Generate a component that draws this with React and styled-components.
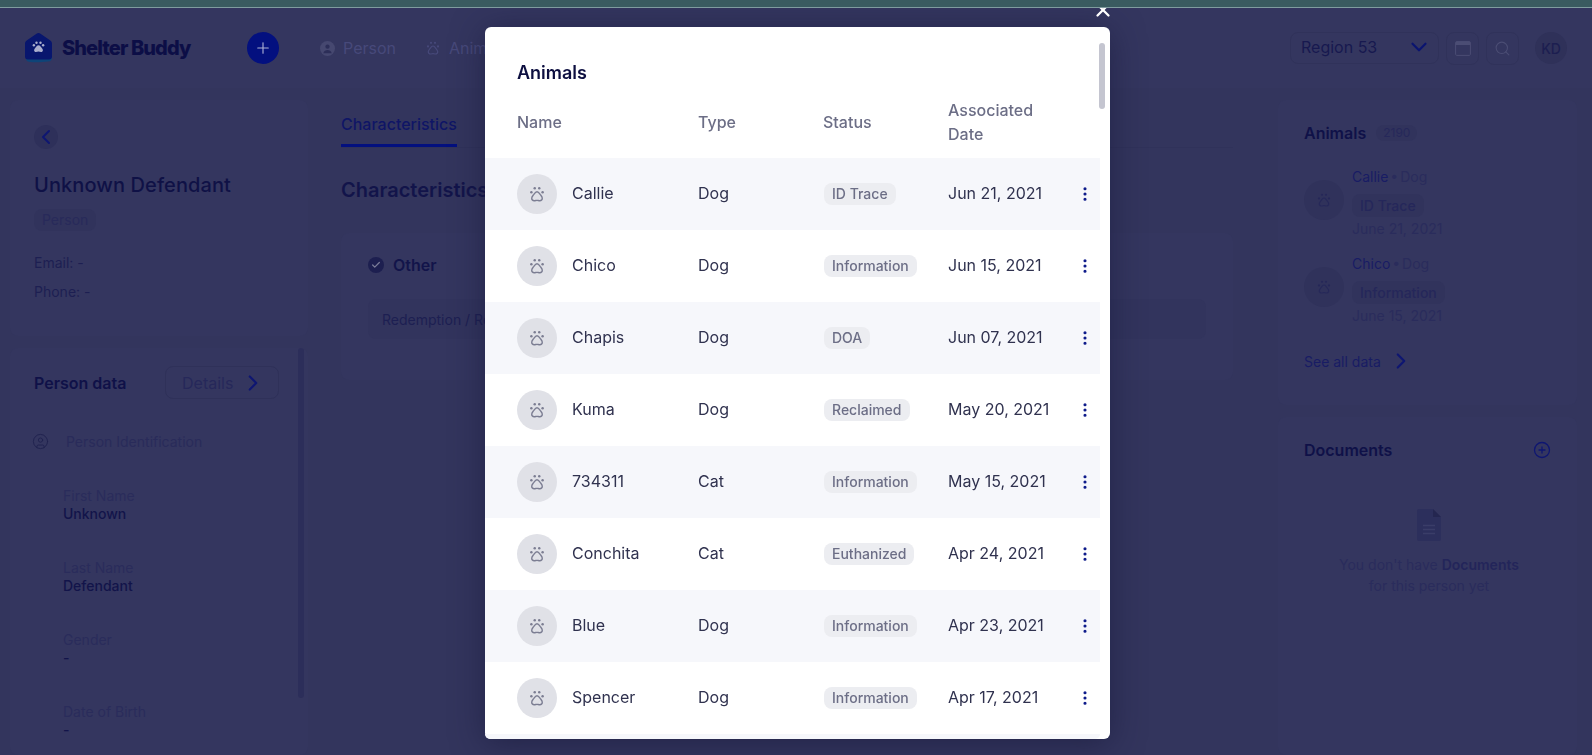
import React from 'react';
import styled, {createGlobalStyle} from 'styled-components';
import {ChevronLeft, ChevronRight, ChevronDown, Plus, Search, X, CirclePlus, CircleUser, EllipsisVertical, Check} from 'lucide-react';

const ANIMALS = [
  {name: 'Callie', type: 'Dog', status: 'ID Trace', date: 'Jun 21, 2021'},
  {name: 'Chico', type: 'Dog', status: 'Information', date: 'Jun 15, 2021'},
  {name: 'Chapis', type: 'Dog', status: 'DOA', date: 'Jun 07, 2021'},
  {name: 'Kuma', type: 'Dog', status: 'Reclaimed', date: 'May 20, 2021'},
  {name: '734311', type: 'Cat', status: 'Information', date: 'May 15, 2021'},
  {name: 'Conchita', type: 'Cat', status: 'Euthanized', date: 'Apr 24, 2021'},
  {name: 'Blue', type: 'Dog', status: 'Information', date: 'Apr 23, 2021'},
  {name: 'Spencer', type: 'Dog', status: 'Information', date: 'Apr 17, 2021'},
];

const FIELDS = [
  {label: 'First Name', value: 'Unknown'},
  {label: 'Last Name', value: 'Defendant'},
  {label: 'Gender', value: '-'},
  {label: 'Date of Birth', value: '-'},
];

const RECENT = [
  {name: 'Callie', type: 'Dog', status: 'ID Trace', date: 'June 21, 2021'},
  {name: 'Chico', type: 'Dog', status: 'Information', date: 'June 15, 2021'},
];

const Paw = ({size = 16}) => (
  <svg width={size} height={size} viewBox="0 0 16 16" fill="none">
    <circle cx="3" cy="6.4" r="1.1" fill="currentColor" />
    <circle cx="6" cy="2.800" r="1.1" fill="currentColor" />
    <circle cx="10" cy="2.800" r="1.1" fill="currentColor" />
    <circle cx="13" cy="6.4" r="1.1" fill="currentColor" />
    <path
      d="M8 6c-1.300 0-2 1.200-2.800 2.400-.8 1.100-1.900 2-1.900 3.400 0 1.400 1.100 2.200 2.300 2.200 1 0 1.500-.4 2.400-.4s1.400.4 2.400.4c1.200 0 2.300-.8 2.300-2.200 0-1.400-1.100-2.300-1.900-3.400C10 7.200 9.300 6 8 6z"
      stroke="currentColor"
      strokeWidth="1.2"
    />
  </svg>
);

const Logo = () => (
  <svg width="32" height="32" viewBox="0 0 32 32">
    <path d="M2 16 3 27c0 2 2 3 5 3 6 1 12-.5 17-.5 3 0 4-2 4-4V16z" fill="#0e4478" />
    <path d="M15.500 1c.8 0 1.500.3 2 .7l9.500 6.500c1.300.9 2 2 2 3.600v12.700c0 2-1.200 3-3 3H5c-2 0-3-1-3-3V11.800c0-1.600.7-2.700 2-3.600L13.500 1.700c.5-.4 1.200-.7 2-.7z" fill="#08166e" />
    <g fill="#aaaecd" transform="translate(3.100 3.200) scale(.8)">
      <circle cx="9.700" cy="12.500" r="1.500" />
      <circle cx="13" cy="9.500" r="1.500" />
      <circle cx="18" cy="9.500" r="1.500" />
      <circle cx="21.300" cy="12.500" r="1.500" />
      <path d="M15.500 12.500c-2 0-2.900 2-3.900 3.200-1 1.100-1.600 2-1.600 3.100 0 1.300 1 2.200 2.300 2.200 1.300 0 2-.5 3.200-.5s1.900.5 3.200.5c1.300 0 2.300-.9 2.300-2.200 0-1.100-.6-2-1.600-3.100-1-1.200-1.900-3.200-3.900-3.200z" />
    </g>
  </svg>
);

const PersonDot = () => (
  <svg width="15" height="15" viewBox="0 0 16 16">
    <circle cx="8" cy="8" r="8" fill="#464870" />
    <circle cx="8" cy="6" r="2.300" fill="#2c2e58" />
    <path d="M3.500 13c.6-2.400 2.400-3.400 4.500-3.400s3.900 1 4.500 3.400z" fill="#2c2e58" />
  </svg>
);

const CalendarIcon = () => (
  <svg width="16" height="15" viewBox="0 0 16 15" fill="none">
    <rect x=".6" y=".6" width="14.800" height="13.800" rx="1.200" stroke="#4b4d74" strokeWidth="1" />
    <path d="M.6 1.800c0-.7.5-1.200 1.200-1.200h12.400c.7 0 1.200.5 1.200 1.200V4H.6z" fill="#4b4d74" />
  </svg>
);

const FileIcon = () => (
  <svg width="24" height="32" viewBox="0 0 24 32">
    <path d="M2 0h14l8 8v22a2 2 0 0 1-2 2H2a2 2 0 0 1-2-2V2a2 2 0 0 1 2-2z" fill="#2c2f5c" />
    <path d="M16 0l8 8h-8z" fill="#242650" />
    <path d="M6 16.500h12M6 20.500h12M6 24.500h12" stroke="#3a3d68" strokeWidth="1.500" />
  </svg>
);

const App = () => (
  <Page>
    <GlobalStyle />
    <TopStrip />
    <Header>
      <Brand>
        <Logo />
        <BrandName>Shelter Buddy</BrandName>
      </Brand>
      <AddButton><Plus size={18} strokeWidth={1.5} /></AddButton>
      <NavItem><PersonDot />Person</NavItem>
      <NavItem><Paw />Animals</NavItem>
      <HeaderRight>
        <RegionSelect>
          Region 53
          <ChevronDown size={26} strokeWidth={2} color="#0a1470" />
        </RegionSelect>
        <IconButton><CalendarIcon /></IconButton>
        <IconButton><Search size={17} strokeWidth={1.5} color="#4b4d74" /></IconButton>
        <Avatar>KD</Avatar>
      </HeaderRight>
    </Header>

    <Main>
      <LeftColumn>
        <ProfileCard>
          <BackButton><ChevronLeft size={26} strokeWidth={2} /></BackButton>
          <PersonName>Unknown Defendant</PersonName>
          <PersonChip>Person</PersonChip>
          <ContactList>
            <ContactLine>Email: -</ContactLine>
            <ContactLine>Phone: -</ContactLine>
          </ContactList>
        </ProfileCard>
        <DataCard>
          <DataHead>
            <CardTitle>Person data</CardTitle>
            <DetailsButton>Details<ChevronRight size={26} strokeWidth={2} color="#0e1672" /></DetailsButton>
          </DataHead>
          <SectionRow>
            <CircleUser size={17} strokeWidth={1.3} color="#20224f" />
            Person Identification
          </SectionRow>
          <FieldList>
            {FIELDS.map(field => (
              <Field key={field.label}>
                <FieldLabel>{field.label}</FieldLabel>
                <FieldValue>{field.value}</FieldValue>
              </Field>
            ))}
          </FieldList>
          <PanelScroll />
        </DataCard>
      </LeftColumn>

      <CenterColumn>
        <Tabs>
          <Tab>Characteristics</Tab>
        </Tabs>
        <Heading>Characteristics</Heading>
        <OtherCard>
          <OtherHead>
            <CheckDot><Check size={10} strokeWidth={3} color="#7a7c98" /></CheckDot>
            Other
          </OtherHead>
          <OtherItem>Redemption / Reclaim</OtherItem>
        </OtherCard>
      </CenterColumn>

      <RightColumn>
        <AnimalsCard>
          <TitleRow>
            <CardTitle>Animals</CardTitle>
            <CountBadge>2190</CountBadge>
          </TitleRow>
          {RECENT.map(item => (
            <RecentItem key={item.name}>
              <RecentAvatar><Paw /></RecentAvatar>
              <div>
                <RecentName>{item.name}<RecentType> • {item.type}</RecentType></RecentName>
                <RecentChip>{item.status}</RecentChip>
                <RecentDate>{item.date}</RecentDate>
              </div>
            </RecentItem>
          ))}
          <SeeAll>See all data<ChevronRight size={26} strokeWidth={2} color="#0e1672" /></SeeAll>
        </AnimalsCard>
        <DocumentsCard>
          <DocHead>
            <CardTitle>Documents</CardTitle>
            <CirclePlus size={18} strokeWidth={1.7} color="#0e1672" />
          </DocHead>
          <Empty>
            <FileIcon />
            <EmptyText>You don't have <b>Documents</b><br />for this person yet</EmptyText>
          </Empty>
        </DocumentsCard>
      </RightColumn>
    </Main>

    <Modal>
      <CloseButton><X size={22} strokeWidth={2.5} /></CloseButton>
      <ModalThumb />
      <ModalTitle>Animals</ModalTitle>
      <TableHead>
        <span>Name</span>
        <span>Type</span>
        <span>Status</span>
        <span>Associated Date</span>
      </TableHead>
      {ANIMALS.map(animal => (
        <TableRow key={animal.name}>
          <NameCell>
            <RowAvatar><Paw size={18} /></RowAvatar>
            <CellText>{animal.name}</CellText>
          </NameCell>
          <CellText>{animal.type}</CellText>
          <span><StatusChip>{animal.status}</StatusChip></span>
          <CellText>{animal.date}</CellText>
          <Kebab><EllipsisVertical size={18} strokeWidth={2.2} /></Kebab>
        </TableRow>
      ))}
      <TableRow />
    </Modal>
  </Page>
);

const GlobalStyle = createGlobalStyle`
  html, body {
    margin: 0;
    padding: 0;
    height: 100%;
    overflow: hidden;
  }
  body {
    font-family: Inter, "Liberation Sans", sans-serif;
    background: #34365f;
  }
  * {
    box-sizing: border-box;
  }
`;

const Page = styled.div`
  height: 755px;
  overflow: hidden;
  background: #34365f;
  color: #12144a;
  display: flex;
  flex-direction: column;
`;

const TopStrip = styled.div`
  position: relative;
  z-index: 3;
  height: 8px;
  flex: none;
  background: #3a5b60;
  border-bottom: 1px solid #7f9c9f;
`;

const Header = styled.header`
  height: 80px;
  flex: none;
  display: flex;
  align-items: center;
  padding: 0 25px 0 23px;
`;

const Brand = styled.div`
  display: flex;
  align-items: center;
  gap: 7px;
  width: 224px;
`;

const BrandName = styled.span`
  font-size: 20px;
  font-weight: 800;
  letter-spacing: -0.9px;
  color: #0c0e46;
`;

const AddButton = styled.div`
  width: 32px;
  height: 32px;
  border-radius: 50%;
  background: #03107f;
  color: #aeb1d4;
  display: flex;
  align-items: center;
  justify-content: center;
  margin-right: 41px;
`;

const NavItem = styled.div`
  display: flex;
  align-items: center;
  gap: 8px;
  font-size: 16px;
  color: #47497a;
  margin-right: 29px;
  white-space: nowrap;
`;

const HeaderRight = styled.div`
  margin-left: auto;
  display: flex;
  align-items: center;
  gap: 7px;
`;

const RegionSelect = styled.div`
  width: 149px;
  height: 32px;
  border: 1px solid #30325a;
  border-radius: 8px;
  padding: 0 6px 2px 10px;
  display: flex;
  align-items: center;
  justify-content: space-between;
  font-size: 16px;
  color: #17194f;
`;

const IconButton = styled.div`
  width: 33px;
  height: 33px;
  border: 1px solid #30325a;
  border-radius: 8px;
  display: flex;
  align-items: center;
  justify-content: center;
`;

const Avatar = styled.div`
  width: 32px;
  height: 32px;
  border-radius: 50%;
  margin-left: 9px;
  background: #2f3159;
  color: #1c1e50;
  font-size: 14px;
  font-weight: 500;
  display: flex;
  align-items: center;
  justify-content: center;
`;

const Main = styled.main`
  flex: 1;
  min-height: 0;
  display: grid;
  grid-template-columns: 298px 1fr 299px;
  column-gap: 33px;
  padding: 12px 15px 0 10px;
  background: #33355d;
`;

const Card = styled.section`
  background: #34365f;
  border-radius: 8px;
`;

const LeftColumn = styled.div`
  display: flex;
  flex-direction: column;
  gap: 12px;
  min-height: 0;
`;

const ProfileCard = styled(Card)`
  height: 236px;
  flex: none;
  padding: 25px 24px;
  display: flex;
  flex-direction: column;
  align-items: flex-start;
`;

const BackButton = styled.div`
  width: 24px;
  height: 24px;
  border-radius: 50%;
  background: #2e305a;
  color: #0e1672;
  display: flex;
  align-items: center;
  justify-content: center;
`;

const PersonName = styled.h1`
  margin: 24px 0 0;
  font-size: 20px;
  line-height: 24px;
  font-weight: 500;
  letter-spacing: 0.1px;
  color: #0f1146;
`;

const PersonChip = styled.span`
  margin-top: 12px;
  height: 22px;
  padding: 0 8px;
  border-radius: 8px;
  background: #31335c;
  font-size: 14px;
  line-height: 22px;
  color: #282a5a;
`;

const ContactList = styled.div`
  margin-top: 17px;
`;

const ContactLine = styled.div`
  font-size: 14px;
  line-height: 29px;
  color: #1d1f52;
`;

const DataCard = styled(Card)`
  position: relative;
  flex: 1;
  min-height: 0;
  padding: 18px 24px 0;
  overflow: hidden;
`;

const DataHead = styled.div`
  display: flex;
  align-items: center;
  justify-content: space-between;
  height: 33px;
  padding-right: 5px;
`;

const CardTitle = styled.h2`
  margin: 0;
  font-size: 16px;
  font-weight: 600;
  line-height: 20px;
  color: #0f1148;
`;

const DetailsButton = styled.div`
  width: 114px;
  height: 33px;
  border: 1px solid #2f3159;
  border-radius: 8px;
  display: flex;
  align-items: center;
  justify-content: space-between;
  padding: 0 12px 0 16px;
  font-size: 16px;
  color: #26285a;
`;

const SectionRow = styled.div`
  display: flex;
  align-items: center;
  gap: 17px;
  margin: 34px 0 0 -2px;
  font-size: 14px;
  line-height: 17px;
  color: #292b5a;
`;

const FieldList = styled.div`
  margin: 37px 0 0 29px;
  display: flex;
  flex-direction: column;
  gap: 36px;
`;

const Field = styled.div`
  font-size: 14px;
  line-height: 18px;
`;

const FieldLabel = styled.div`
  color: #2a2c5b;
`;

const FieldValue = styled.div`
  font-weight: 500;
  color: #12144a;
`;

const PanelScroll = styled.div`
  position: absolute;
  top: 0;
  right: 4px;
  width: 6px;
  height: 350px;
  border-radius: 3px;
  background: #2c2e5a;
`;

const CenterColumn = styled.div`
  margin-right: 12px;
`;

const Tabs = styled.div`
  height: 48px;
  border-bottom: 1px solid #30325a;
  display: flex;
  align-items: flex-end;
`;

const Tab = styled.div`
  font-size: 16px;
  font-weight: 500;
  line-height: 20px;
  padding-bottom: 10px;
  color: #0f1566;
  border-bottom: 3px solid #03107f;
`;

const Heading = styled.h2`
  margin: 30px 0 0;
  font-size: 20px;
  line-height: 24px;
  font-weight: 600;
  color: #12144a;
`;

const OtherCard = styled(Card)`
  margin-top: 31px;
  height: 147px;
  padding: 22px 27px;
`;

const OtherHead = styled.div`
  display: flex;
  align-items: center;
  gap: 9px;
  font-size: 16px;
  font-weight: 600;
  color: #12144a;
`;

const CheckDot = styled.span`
  width: 16px;
  height: 16px;
  border-radius: 50%;
  background: #1d1f50;
  display: flex;
  align-items: center;
  justify-content: center;
`;

const OtherItem = styled.div`
  margin-top: 24px;
  height: 40px;
  padding: 0 14px;
  display: flex;
  align-items: center;
  font-size: 14px;
  color: #1d1f52;
  background: #32345d;
  border-radius: 8px;
`;

const RightColumn = styled.div`
  display: flex;
  flex-direction: column;
  gap: 12px;
`;

const AnimalsCard = styled(Card)`
  height: 305px;
  padding: 23px 26px 0;
`;

const TitleRow = styled.div`
  display: flex;
  align-items: center;
  gap: 10px;
  margin-bottom: 25px;
`;

const CountBadge = styled.span`
  height: 16px;
  padding: 0 7px;
  border-radius: 8px;
  background: #31335c;
  font-size: 12px;
  line-height: 16px;
  color: #26285a;
`;

const RecentItem = styled.div`
  display: flex;
  align-items: flex-start;
  gap: 8px;
  margin-bottom: 17px;
`;

const RecentAvatar = styled.div`
  width: 40px;
  height: 40px;
  flex: none;
  margin-top: 12px;
  border-radius: 50%;
  background: #30325b;
  color: #262859;
  display: flex;
  align-items: center;
  justify-content: center;
`;

const RecentName = styled.div`
  font-size: 14px;
  line-height: 18px;
  word-spacing: -2px;
  color: #181c64;
`;

const RecentType = styled.span`
  color: #2a2c5c;
`;

const RecentChip = styled.div`
  width: fit-content;
  margin-top: 8px;
  height: 23px;
  padding: 0 8px;
  border-radius: 8px;
  background: #31335c;
  font-size: 14px;
  font-weight: 500;
  line-height: 23px;
  color: #25275a;
`;

const RecentDate = styled.div`
  font-size: 14px;
  line-height: 18px;
  margin-top: 3px;
  color: #2a2c5c;
`;

const SeeAll = styled.div`
  display: flex;
  align-items: center;
  gap: 7px;
  margin-top: 23px;
  font-size: 14px;
  color: #181c64;
`;

const DocumentsCard = styled(Card)`
  flex: 1;
  padding: 23px 26px;
`;

const DocHead = styled.div`
  display: flex;
  align-items: center;
  justify-content: space-between;
`;

const Empty = styled.div`
  margin-top: 49px;
  padding-left: 3px;
  display: flex;
  flex-direction: column;
  align-items: center;
`;

const EmptyText = styled.p`
  margin: 13px 0 0;
  text-align: center;
  font-size: 14px;
  line-height: 21px;
  color: #2a2c5c;
  b {
    font-weight: 600;
    color: #23255a;
  }
`;

const Modal = styled.div`
  position: fixed;
  z-index: 2;
  left: 485px;
  top: 27px;
  width: 625px;
  height: 712px;
  background: #fff;
  border-radius: 6px;
  box-shadow: 0 4px 32px rgba(24, 26, 60, 0.65);
`;

const CloseButton = styled.div`
  position: absolute;
  top: -28px;
  right: -4px;
  color: #fff;
  width: 22px;
  height: 22px;
`;

const ModalThumb = styled.div`
  position: absolute;
  top: 16px;
  right: 5px;
  width: 6px;
  height: 66px;
  border-radius: 3px;
  background: #c4c5d0;
`;

const ModalTitle = styled.h2`
  margin: 0;
  padding: 35px 32px 0;
  font-size: 18px;
  line-height: 22px;
  font-weight: 600;
  color: #0d0f40;
`;

const Columns = styled.div`
  display: grid;
  grid-template-columns: 181px 125px 125px 1fr 30px;
  align-items: center;
  width: 615px;
  padding-left: 32px;
`;

const TableHead = styled(Columns)`
  height: 74px;
  padding-top: 2px;
  font-size: 16px;
  font-weight: 500;
  line-height: 24px;
  color: #6c6e86;
`;

const TableRow = styled(Columns)`
  height: 72px;
  font-size: 16px;
  color: #30324f;
  &:nth-of-type(even) {
    background: #f6f7fb;
  }
  &:last-child {
    height: 5px;
    border-radius: 0 0 6px 6px;
  }
`;

const CellText = styled.span`
  padding-bottom: 2px;
`;

const NameCell = styled.span`
  display: flex;
  align-items: center;
  gap: 15px;
`;

const RowAvatar = styled.span`
  width: 40px;
  height: 40px;
  flex: none;
  border-radius: 50%;
  background: #e0e1e7;
  color: #7b7d92;
  display: flex;
  align-items: center;
  justify-content: center;
`;

const StatusChip = styled.span`
  display: inline-block;
  height: 22px;
  margin-left: 1px;
  padding: 0 8px;
  border-radius: 8px;
  background: #ecedf1;
  font-size: 14px;
  font-weight: 500;
  line-height: 22px;
  color: #6c6e86;
`;

const Kebab = styled.span`
  display: flex;
  justify-content: center;
  color: #0e1b8a;
`;

export default App;
